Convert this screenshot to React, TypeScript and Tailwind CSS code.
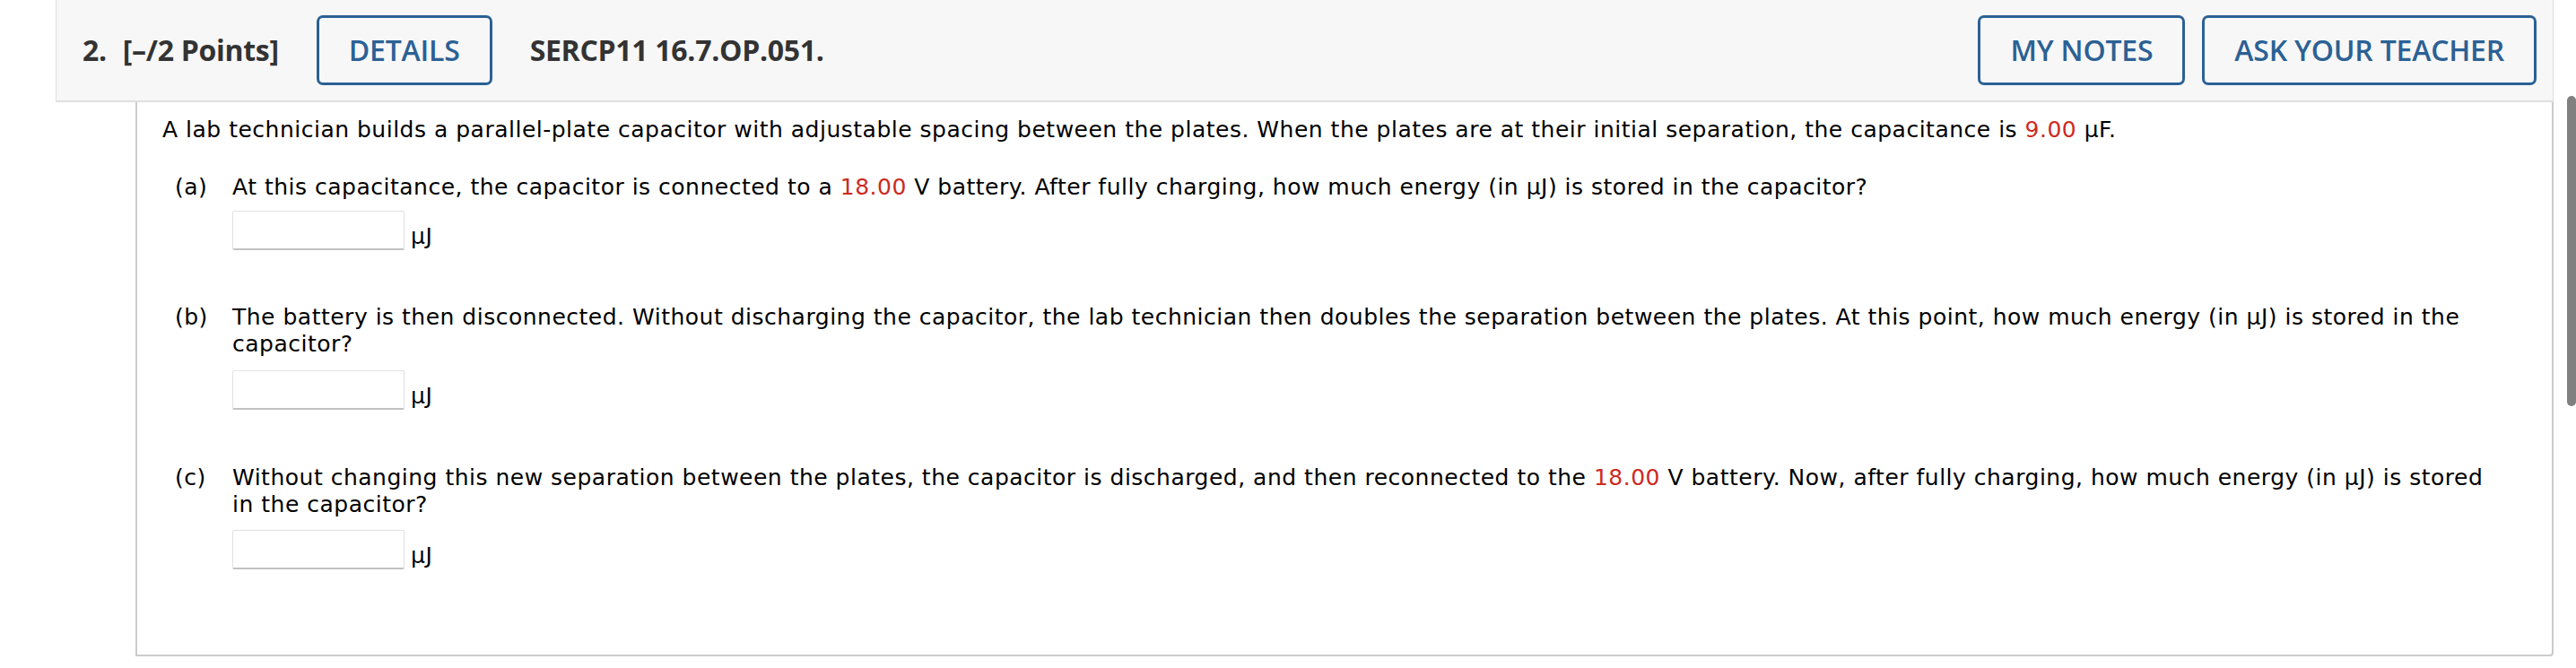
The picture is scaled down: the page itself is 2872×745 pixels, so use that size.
import React from 'react';

const sans = { fontFamily: '"Open Sans", "Noto Sans", sans-serif' };

function OutlineButton({ label }: { label: string }) {
  return (
    <button
      type="button"
      className="h-[78px] px-[33px] border-[3px] border-[#2b6194] rounded-[7px] text-[32px] font-semibold text-[#2b6194] leading-none tracking-[-0.2px]"
    >
      {label}
    </button>
  );
}

function Red({ children }: { children: React.ReactNode }) {
  return <span className="text-[#cd2b1f]">{children}</span>;
}

function Answer({ top }: { top: string }) {
  return (
    <div className={`flex items-end ${top}`}>
      <input
        type="text"
        className="w-[192px] h-[44px] bg-white border border-[#e1e1e1] border-b-2 border-b-[#c2c2c2] rounded-[2px] outline-none"
      />
      <span className="ml-[7px]">μJ</span>
    </div>
  );
}

function Part({
  label,
  children,
  top,
  gap
}: {
  label: string;
  children: React.ReactNode;
  top: string;
  gap: string;
}) {
  return (
    <div className={`flex ${top}`}>
      <div className="w-[64px] shrink-0">{label}</div>
      <div className="flex-1">
        <p>{children}</p>
        <Answer top={gap} />
      </div>
    </div>
  );
}

export default function App() {
  return (
    <div className="relative w-[2872px] h-[745px] bg-white overflow-hidden">
      {/* question header */}
      <div
        className="ml-[62px] w-[2785px] h-[114px] bg-[#f7f7f7] border-l border-r border-b-2 border-[#dfdfdf] flex items-center pl-[29px] pr-[18px] text-[#333333]"
        style={sans}
      >
        <span className="text-[32px] font-bold tracking-[-0.3px]">2.</span>
        <span className="ml-[18px] text-[32px] font-bold tracking-[-0.3px]">[–/2 Points]</span>
        <div className="ml-[42px]">
          <OutlineButton label="DETAILS" />
        </div>
        <span className="ml-[42px] text-[32px] font-bold tracking-[-0.3px]">SERCP11 16.7.OP.051.</span>
        <div className="ml-auto flex gap-[19px]">
          <OutlineButton label="MY NOTES" />
          <OutlineButton label="ASK YOUR TEACHER" />
        </div>
      </div>

      {/* question body */}
      <div
        className="ml-[151px] w-[2696px] h-[618px] border-l-2 border-r-2 border-b-2 border-[#cccccc] rounded-br-[4px] pt-[16px] pl-[28px] pr-[54px] text-[25px] leading-[30px] tracking-[0.5px] text-black"
        style={{ fontFamily: '"DejaVu Sans", Verdana, sans-serif' }}
      >
        <p className="whitespace-nowrap">
          A lab technician builds a parallel-plate capacitor with adjustable spacing between the plates. When the
          plates are at their initial separation, the capacitance is <Red>9.00</Red> μF.
        </p>
        <div className="pl-[14px]">
          <Part label="(a)" top="mt-[34px]" gap="mt-[11px]">
            At this capacitance, the capacitor is connected to a <Red>18.00</Red> V battery. After fully charging, how
            much energy (in μJ) is stored in the capacitor?
          </Part>
          <Part label="(b)" top="mt-[60px]" gap="mt-[14px]">
            The battery is then disconnected. Without discharging the capacitor, the lab technician then doubles the
            separation between the plates. At this point, how much energy (in μJ) is stored in the capacitor?
          </Part>
          <Part label="(c)" top="mt-[61px]" gap="mt-[13px]">
            Without changing this new separation between the plates, the capacitor is discharged, and then
            reconnected to the <Red>18.00</Red> V battery. Now, after fully charging, how much energy (in μJ) is stored
            in the capacitor?
          </Part>
        </div>
      </div>

      {/* scrollbar thumb */}
      <div className="absolute right-0 top-[107px] w-[10px] h-[346px] rounded-full bg-[#808080]" />
    </div>
  );
}
